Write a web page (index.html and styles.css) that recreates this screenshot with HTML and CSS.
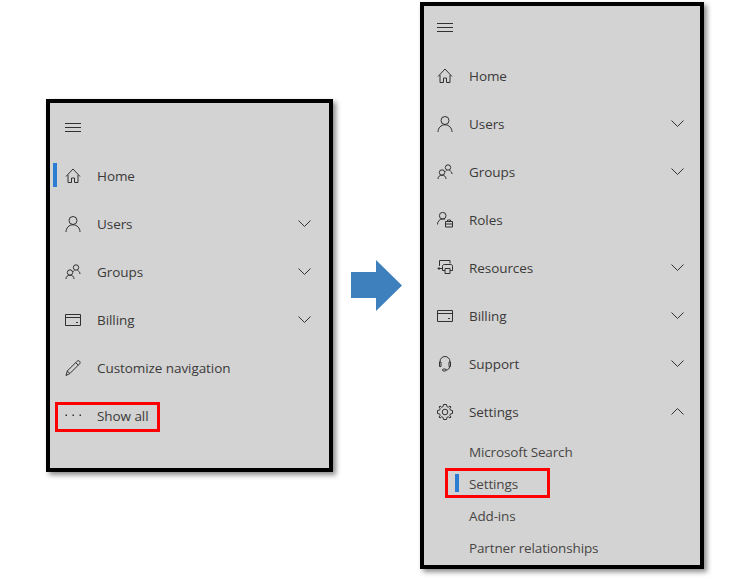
FILE: index.html
```html
<!DOCTYPE html>
<html lang="en">
<head>
<meta charset="utf-8">
<title>Navigation: show all</title>
<link rel="stylesheet" href="styles.css">
</head>
<body>
<svg class="sprite" aria-hidden="true">
  <symbol id="i-menu" viewBox="0 0 16 16"><path d="M0 4.500h16M0 8.500h16M0 12.500h16"/></symbol>
  <symbol id="i-home" viewBox="0 0 16 16"><path d="M1 8.500 8 1l7 7.500M3 7v7.500h3.500V10h3v4.500H13V7"/></symbol>
  <symbol id="i-user" viewBox="0 0 16 16"><circle cx="8" cy="4.500" r="4"/><path d="M1 16c0-4 3-7.200 7-7.200s7 3.200 7 7.200"/></symbol>
  <symbol id="i-group" viewBox="0 0 16 16"><circle cx="5" cy="8.500" r="2.700"/><path d="M1 15c0-2.500 1.700-3.800 4-3.800s4 1.300 4 3.800"/><circle cx="11" cy="3.500" r="2.700"/><path d="M9.500 6.500c-.5.3-1 .7-1.300 1.200M12.500 6.500c1.500.6 2.500 1.800 2.500 3.500"/></symbol>
  <symbol id="i-card" viewBox="0 0 16 16"><path d="M.5 2.500h15v11H.5zM.5 5.500h15M11 10.500h2"/></symbol>
  <symbol id="i-pen" viewBox="0 0 16 16"><path d="M1 15.500 2.300 11 12 1.300c.8-.8 1.900-.8 2.600 0 .7.700.7 1.800 0 2.500L4.900 13.500zM2.300 11l2.600 2.500M10.700 2.700l2.600 2.500"/></symbol>
  <symbol id="i-dots" viewBox="0 0 16 16"><path class="dot" d="M.5 6.500h1.500V8H.5zM7.500 6.500H9V8H7.500zM14.500 6.500H16V8h-1.500z"/></symbol>
  <symbol id="i-roles" viewBox="0 0 16 16"><circle cx="5.700" cy="3.700" r="3.300"/><path d="M.5 12.500c0-3.300 2.300-5.500 5.200-5.500 .8 0 1.500.1 2.100.4"/><path d="M8.500 9.500h7v5.500h-7zM8.500 12h7M10.500 9.500V8h3v1.500"/></symbol>
  <symbol id="i-res" viewBox="0 0 16 16"><path d="M2.500 6V.5H13v3M1 8.500h4M2.500 7 1 8.500 2.500 10"/><path d="M8 10.500H5.500V6.200c0-1 .7-1.700 1.700-1.700h6.600c1 0 1.700.7 1.700 1.700v4.300H13"/><path d="M8 8.500h5v5H8z"/></symbol>
  <symbol id="i-help" viewBox="0 0 16 16"><path d="M3 6V5.500a5 5 0 0 1 10 0V6"/><path d="M2.500 6h1.500v4.500H2.500zM12 6h1.500v4.500H12z"/><path d="M12.500 10.500c0 2.300-1.400 3.500-3.500 3.500"/><rect x="5.500" y="13" width="3.500" height="2" rx="1"/></symbol>
  <symbol id="i-gear" viewBox="0 0 16 16"><circle cx="8" cy="8" r="2.800"/><path d="M6.500.5h3l.4 2.100 1.400.6L13 2l1 1-1.200 1.700.6 1.400 2.100.4v3l-2.100.4-.6 1.400L14 13l-1 1-1.700-1.200-1.400.6-.4 2.100h-3l-.4-2.100-1.400-.6L3 14l-1-1 1.200-1.700-.6-1.400-2.100-.4v-3l2.100-.4.600-1.400L2 3l1-1 1.700 1.200 1.400-.6z"/></symbol>
  <symbol id="i-down" viewBox="0 0 13 13"><path d="M.5 3.500 6.500 9.500l6-6"/></symbol>
  <symbol id="i-up" viewBox="0 0 13 13"><path d="M.5 9.500l6-6 6 6"/></symbol>
</svg>

<main class="stage">
  <nav class="panel panel-short">
    <div class="burger"><svg class="icon"><use href="#i-menu"/></svg></div>
    <div class="row active"><svg class="icon"><use href="#i-home"/></svg><span class="label">Home</span></div>
    <div class="row"><svg class="icon"><use href="#i-user"/></svg><span class="label">Users</span><svg class="chev"><use href="#i-down"/></svg></div>
    <div class="row"><svg class="icon"><use href="#i-group"/></svg><span class="label">Groups</span><svg class="chev"><use href="#i-down"/></svg></div>
    <div class="row"><svg class="icon"><use href="#i-card"/></svg><span class="label">Billing</span><svg class="chev"><use href="#i-down"/></svg></div>
    <div class="row"><svg class="icon"><use href="#i-pen"/></svg><span class="label">Customize navigation</span></div>
    <div class="row"><svg class="icon"><use href="#i-dots"/></svg><span class="label">Show all</span><span class="callout callout-show"></span></div>
  </nav>

  <svg class="arrow" viewBox="0 0 51 51" aria-hidden="true"><polygon points="0,12 25,12 25,0 51,25.500 25,51 25,38 0,38"/></svg>

  <nav class="panel panel-tall">
    <div class="burger"><svg class="icon"><use href="#i-menu"/></svg></div>
    <div class="row"><svg class="icon"><use href="#i-home"/></svg><span class="label">Home</span></div>
    <div class="row"><svg class="icon"><use href="#i-user"/></svg><span class="label">Users</span><svg class="chev"><use href="#i-down"/></svg></div>
    <div class="row"><svg class="icon"><use href="#i-group"/></svg><span class="label">Groups</span><svg class="chev"><use href="#i-down"/></svg></div>
    <div class="row"><svg class="icon"><use href="#i-roles"/></svg><span class="label">Roles</span></div>
    <div class="row"><svg class="icon"><use href="#i-res"/></svg><span class="label">Resources</span><svg class="chev"><use href="#i-down"/></svg></div>
    <div class="row"><svg class="icon"><use href="#i-card"/></svg><span class="label">Billing</span><svg class="chev"><use href="#i-down"/></svg></div>
    <div class="row"><svg class="icon"><use href="#i-help"/></svg><span class="label">Support</span><svg class="chev"><use href="#i-down"/></svg></div>
    <div class="row"><svg class="icon"><use href="#i-gear"/></svg><span class="label">Settings</span><svg class="chev"><use href="#i-up"/></svg></div>
    <div class="sub">Microsoft Search</div>
    <div class="sub sub-active">Settings<span class="callout callout-settings"></span></div>
    <div class="sub">Add-ins</div>
    <div class="sub">Partner relationships</div>
  </nav>
</main>
</body>
</html>
```

FILE: styles.css
```css
html, body {
  margin: 0;
  height: 100%;
  background: #fff;
  overflow: hidden;
}

.sprite {
  position: absolute;
  width: 0;
  height: 0;
}

.stage {
  display: flex;
  align-items: flex-start;
  padding-left: 46px;
  font-family: "Open Sans", "Noto Sans", "Liberation Sans", sans-serif;
  font-size: 13.5px;
  letter-spacing: -0.07px;
  color: #3b3a39;
}

.panel {
  box-sizing: border-box;
  background: #d3d3d3;
  border: 4px solid #000;
  box-shadow: 3px 3px 5px rgba(0, 0, 0, 0.45);
}

.panel-short {
  width: 287px;
  margin-top: 99px;
  padding: 3px 0 28px;
  --inset: 15px;
  --chev-gap: 18px;
}

.panel-tall {
  width: 284px;
  margin-top: 2px;
  padding-bottom: 1px;
  --inset: 13px;
  --chev-gap: 16px;
}

.burger {
  display: flex;
  align-items: center;
  height: 42px;
  margin-bottom: 4px;
  padding-left: var(--inset);
}

.row {
  position: relative;
  display: flex;
  align-items: center;
  height: 48px;
  padding: 0 var(--chev-gap) 0 var(--inset);
}

.icon {
  flex: none;
  width: 16px;
  height: 16px;
  fill: none;
  stroke: #323130;
  stroke-width: 1;
}

.dot {
  fill: #323130;
  stroke: none;
}

.label {
  flex: 1;
  margin-left: 16px;
}

.chev {
  flex: none;
  width: 13px;
  height: 13px;
  margin-top: -2px;
  fill: none;
  stroke: #323130;
  stroke-width: 1;
}

.active::before {
  content: "";
  position: absolute;
  left: 3px;
  top: 11px;
  width: 4px;
  height: 24px;
  background: #2b7cd3;
}

.sub {
  position: relative;
  display: flex;
  align-items: center;
  height: 32px;
  padding-left: 45px;
  letter-spacing: -0.14px;
  color: #484644;
}

.sub-active::before {
  content: "";
  position: absolute;
  left: 31px;
  top: 6px;
  width: 4px;
  height: 18px;
  background: #2b7cd3;
}

.callout {
  position: absolute;
  box-sizing: border-box;
  border: 3px solid #f00;
  height: 30px;
  width: 105px;
}

.callout-show {
  left: 5px;
  top: 10px;
}

.callout-settings {
  left: 21px;
  top: 0;
}

.arrow {
  flex: none;
  width: 51px;
  height: 51px;
  margin: 260px 18px 0;
  fill: #3e80bd;
}
```
